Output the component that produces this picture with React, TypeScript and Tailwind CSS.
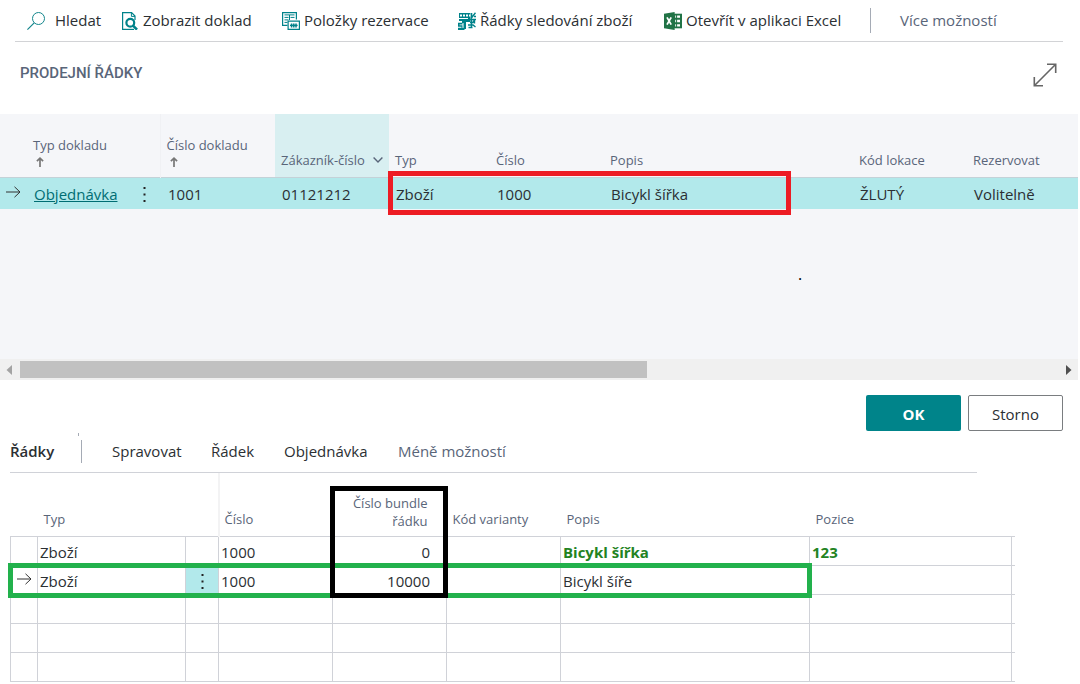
import type { ReactNode } from "react";

const SearchIcon = () => (
  <svg viewBox="0 0 18 18" className="h-[18px] w-[18px] shrink-0" fill="none" stroke="#13868c">
    <circle cx="11.5" cy="6.5" r="6" />
    <path d="M7.2 10.8 L0.4 17.6" strokeWidth="1.2" />
  </svg>
);

const DocumentIcon = () => (
  <svg viewBox="0 0 17 18" className="h-[18px] w-[17px] shrink-0" fill="none" stroke="#00828a">
    <path d="M4 17.4H.6V.6h9L13 4v4" strokeWidth="1.2" />
    <path d="M9.4.6v3.8H13" />
    <circle cx="8.3" cy="10.7" r="3.9" strokeWidth="2.2" />
    <path d="M11 13.6l4 4" strokeWidth="2.6" />
    <path d="M4 17.4h8" strokeWidth="1.2" />
  </svg>
);

const ReservationIcon = () => (
  <svg viewBox="0 0 18 18" className="h-[18px] w-[18px] shrink-0" fill="none" stroke="#00828a">
    <path d="M5.5 13.4H.6V.6h13.8v7" strokeWidth="1.2" />
    <path d="M2.5 2.9h10M2.5 5.4h4M8.5 5.4h4M2.5 7.9h4M2.5 10.4h3M7.5 3v5" />
    <path d="M6.1 9.1h11.3v8.3H6.1z" fill="#fff" strokeWidth="1.2" />
    <path d="M8 13.4h7.6" strokeWidth="1.4" />
    <path d="M9.6 11.4v4M11.8 11.4v4M14 11.4v4" strokeWidth="1.5" />
  </svg>
);

const TrackingIcon = () => (
  <svg viewBox="0 0 18 18" className="h-[18px] w-[18px] shrink-0">
    <path d="M1 1h11.5v9H8v7H6.5v1H0v-2.2h3.5v-1H0v-4h4V9H1z" fill="#00828a" />
    <path d="M2 2.4h2v2H2zM5 2.4h2v2H5zM8 2.4h2v2H8zM11 2.4h1.5v2H11z" fill="#fff" />
    <path d="M1 6h9v.9H1zM1.5 12.4h3v.8h-3zM5.5 11v5h-1v-5z" fill="#fff" />
    <path
      d="M13 6.5 17.5.8M13.6 1v5M16 4.5h2M12 7.5h6M12 10.5h3l1-2M10 13h5l2.5 2M13.5 8v7M16.5 8v3.5M10.5 15.5h4"
      fill="none"
      stroke="#00828a"
      strokeWidth="1.4"
    />
  </svg>
);

const ExcelIcon = () => (
  <svg viewBox="0 0 18 18" className="h-[18px] w-[18px] shrink-0">
    <path d="M10 1.7h8v14.6h-8z" fill="#217346" />
    <path d="M11.2 3.4h4.8v2.4h-4.8zM11.2 7.8h4.8v2.4h-4.8zM11.2 12.2h4.8v2.4h-4.8z" fill="#fff" />
    <path d="M12.6 3v12" stroke="#217346" />
    <path d="M0 1.8 10.6 0v18L0 16.2z" fill="#217346" />
    <path d="M3 5.4l4.2 7.2M7.2 5.4 3 12.6" stroke="#fff" strokeWidth="1.8" />
  </svg>
);

const ExpandIcon = () => (
  <svg viewBox="0 0 24 24" className="h-6 w-6" fill="none" stroke="#666" strokeWidth="1.6">
    <path d="M1.3 22.7 22.7 1.3M14 1.3h8.7V10M1.3 14v8.7H10" />
  </svg>
);

const RowArrow = () => (
  <svg viewBox="0 0 15 12" className="h-3 w-[15px]" fill="none" stroke="#333">
    <path d="M0 6h14M8.5.8 14 6l-5.5 5.2" />
  </svg>
);

const SortArrow = () => (
  <svg viewBox="0 0 8 10" className="mt-[3px] mb-[2px] ml-[3px] h-[10px] w-2" fill="none" stroke="#777" strokeWidth="1.7">
    <path d="M4 10V1.2M.9 4.2 4 1.2l3.1 3" />
  </svg>
);

const MoreButton = () => (
  <button type="button" aria-label="Další možnosti" className="flex h-full w-full items-center justify-center">
    <svg viewBox="0 0 3 17" className="h-[17px] w-[3px]" fill="#222">
      <path d="M.5 1h2v2h-2zM.5 7.5h2v2h-2zM.5 14h2v2h-2z" />
    </svg>
  </button>
);

interface ActionProps {
  icon: ReactNode;
  label: string;
  className: string;
}

const Action = ({ icon, label, className }: ActionProps) => (
  <button type="button" className={`flex shrink-0 items-center whitespace-nowrap ${className}`}>
    {icon}
    <span>{label}</span>
  </button>
);

const Toolbar = () => (
  <div className="mr-[15px] ml-[15px] flex h-[42px] items-center border-b border-[#d2d3d6] pl-3 text-[15px]">
    <Action icon={<SearchIcon />} label="Hledat" className="w-[95px] gap-[10px]" />
    <Action icon={<DocumentIcon />} label="Zobrazit doklad" className="w-[160px] gap-1" />
    <Action icon={<ReservationIcon />} label="Položky rezervace" className="w-[176px] gap-1" />
    <Action icon={<TrackingIcon />} label="Řádky sledování zboží" className="w-[206px] gap-1" />
    <Action icon={<ExcelIcon />} label="Otevřít v aplikaci Excel" className="w-[206px] gap-1" />
    <button type="button" className="flex h-[25px] items-center border-l border-[#a5abb5] pl-[29px] whitespace-nowrap text-[#596579]">
      Více možností
    </button>
  </div>
);

const SalesLines = () => (
  <div className="relative h-[245px] bg-[#f5f6f9]">
    <table className="w-full table-fixed text-left">
      <colgroup>
        <col className="w-[27px]" />
        <col className="w-[104px]" />
        <col className="w-[29px]" />
        <col className="w-[115px]" />
        <col className="w-[114px]" />
        <col className="w-[101px]" />
        <col className="w-[114px]" />
        <col className="w-[249px]" />
        <col className="w-[114px]" />
        <col />
      </colgroup>
      <thead className="text-[13px] leading-[18px] text-[#596579]">
        <tr className="h-[63px] align-bottom *:pb-2 *:pl-[6px] *:font-normal *:whitespace-nowrap">
          <th />
          <th colSpan={2}>
            Typ dokladu
            <SortArrow />
          </th>
          <th className="border-l border-[#f0f1f4]">
            Číslo dokladu
            <SortArrow />
          </th>
          <th className="bg-[#d8eff1]">
            <span className="flex items-center justify-between pr-[6px]">
              Zákazník-číslo
              <svg viewBox="0 0 10 6" className="h-[6px] w-[10px]" fill="none" stroke="#596579" strokeWidth="1.4">
                <path d="M.6.6 5 5 9.4.6" />
              </svg>
            </span>
          </th>
          <th>Typ</th>
          <th>Číslo</th>
          <th>Popis</th>
          <th>Kód lokace</th>
          <th>Rezervovat</th>
        </tr>
      </thead>
      <tbody className="text-[15px] text-[#2b2f33]">
        <tr className="h-8 bg-[#b2e9eb] *:border-t *:border-[#c4d2d8] *:pt-[2px] *:pl-[7px] *:whitespace-nowrap">
          <td className="pt-0! pb-[2px] pl-[6px]!">
            <RowArrow />
          </td>
          <td>
            <a href="#objednavka" className="text-[#006d73] underline">Objednávka</a>
          </td>
          <td className="h-8 pt-[2px]! pr-[2px] pl-0!">
            <MoreButton />
          </td>
          <td className="pl-2!">1001</td>
          <td>01121212</td>
          <td>Zboží</td>
          <td>1000</td>
          <td>Bicykl šířka</td>
          <td>ŽLUTÝ</td>
          <td>Volitelně</td>
        </tr>
      </tbody>
    </table>
    <div className="pointer-events-none absolute top-[57px] left-[388px] h-[44px] w-[403px] border-5 border-[#ed1c24]" />
    <span className="absolute top-[148px] left-[798px] text-base text-black">.</span>
  </div>
);

const ScrollBar = () => (
  <div className="flex h-[21px] items-center bg-[#f0f0f0] px-[6px]">
    <svg viewBox="0 0 6 10" className="h-[10px] w-[6px]" fill="#a3a3a3">
      <path d="M6 0v10L.5 5z" />
    </svg>
    <div className="mx-2 flex-1">
      <div className="h-[17px] w-[60.4%] bg-[#c1c1c1]" />
    </div>
    <svg viewBox="0 0 6 10" className="h-[10px] w-[6px]" fill="#505050">
      <path d="M0 0v10l5.5-5z" />
    </svg>
  </div>
);

const orderLines = [
  { type: "Zboží", no: "1000", bundle: "0", description: "Bicykl šířka", position: "123", bold: true },
  { type: "Zboží", no: "1000", bundle: "10000", description: "Bicykl šíře", position: "", current: true },
  {},
  {},
  {},
];

const OrderLines = () => (
  <div className="relative ml-[10px] w-[1005px]">
    <table className="w-full table-fixed text-left">
      <colgroup>
        <col className="w-[27px]" />
        <col className="w-[148px]" />
        <col className="w-[33px]" />
        <col className="w-[114px]" />
        <col className="w-[114px]" />
        <col className="w-[114px]" />
        <col className="w-[249px]" />
        <col className="w-[202px]" />
        <col />
      </colgroup>
      <thead className="text-[13px] leading-[18px] text-[#596579]">
        <tr className="h-[63px] align-bottom *:pb-2 *:pl-[6px] *:font-normal">
          <th />
          <th>Typ</th>
          <th className="border-r-2 border-[#f3f3f4]" />
          <th className="pl-[5px]!">Číslo</th>
          <th className="pr-[19px] pb-[6px]! text-right">Číslo bundle řádku</th>
          <th>Kód varianty</th>
          <th>Popis</th>
          <th>Pozice</th>
          <th />
        </tr>
      </thead>
      <tbody className="text-[15px] text-[#2b2f33]">
        {orderLines.map((line, i) => (
          <tr
            key={i}
            className="h-[29px] *:border-t *:border-l *:border-[#d0d2d8] *:pt-[3px] *:pl-[2px] last:*:border-b"
          >
            <td className="pt-0!">{line.current && <span className="block pb-px pl-1"><RowArrow /></span>}</td>
            <td>{line.type}</td>
            <td className={line.current ? "h-[29px] bg-[#b2e9eb] pl-0!" : ""}>{line.current && <MoreButton />}</td>
            <td>{line.no}</td>
            <td className="pr-4 text-right">{line.bundle}</td>
            <td />
            <td className={line.bold ? "font-bold text-[#23831f]" : ""}>{line.description}</td>
            <td className="font-bold text-[#23831f]">{line.position}</td>
            <td />
          </tr>
        ))}
      </tbody>
    </table>
    <div className="pointer-events-none absolute top-[90px] -left-[2px] h-[35px] w-[804px] border-5 border-[#22b14c]" />
    <div className="pointer-events-none absolute top-[13px] left-[320px] h-[112px] w-[118px] border-5 border-black" />
  </div>
);

export default function App() {
  return (
    <main className="min-h-screen bg-white pr-[2px] font-['Open_Sans','Noto_Sans',sans-serif] text-[#2b2f33]">
      <Toolbar />
      <header className="flex h-[72px] items-start justify-between pr-[21px] pl-5">
        <h1 className="pt-5 font-['Roboto',sans-serif] text-[15px] font-medium text-[#596579]">PRODEJNÍ ŘÁDKY</h1>
        <button type="button" aria-label="Zvětšit" className="pt-[21px]">
          <ExpandIcon />
        </button>
      </header>
      <SalesLines />
      <ScrollBar />
      <div className="flex justify-end gap-[7px] pt-[15px] pr-[15px] text-[15px]">
        <button type="button" className="h-9 w-[95px] rounded-xs bg-[#00848a] pt-[2px] font-bold text-white">OK</button>
        <button type="button" className="h-9 w-[95px] rounded-xs border border-[#7a7d80] pt-[2px] font-medium">Storno</button>
      </div>
      <nav className="relative mr-[101px] ml-[10px] flex h-[42px] items-center border-b border-[#d0d2d8] text-[15px]">
        <h2 className="w-[71px] font-semibold">Řádky</h2>
        <div className="h-[23px] w-[31px] border-l border-[#a5abb5]" />
        <button type="button" className="w-[99px] text-left">Spravovat</button>
        <button type="button" className="w-[73px] text-left">Řádek</button>
        <button type="button" className="w-[114px] text-left">Objednávka</button>
        <button type="button" className="text-[#596579]">Méně možností</button>
        <span className="absolute top-[2px] left-[68px] h-[3px] w-px bg-[#a5abb5]" />
      </nav>
      <OrderLines />
    </main>
  );
}
